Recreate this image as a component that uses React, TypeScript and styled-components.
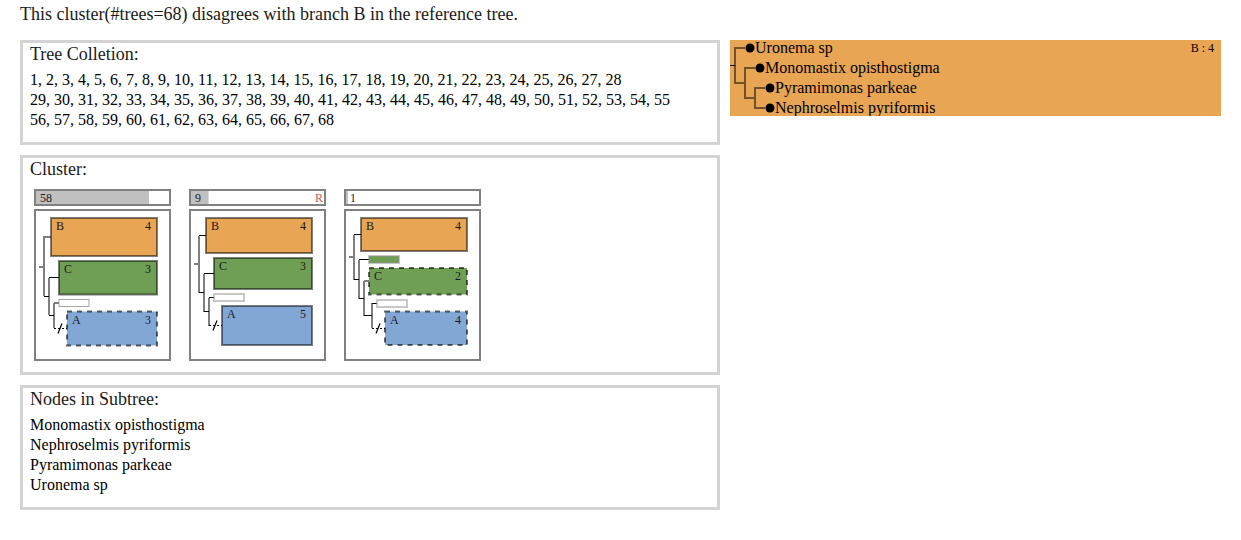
import React from "react";
import styled, { createGlobalStyle } from "styled-components";

const GlobalStyle = createGlobalStyle`
  * { box-sizing: border-box; }
  body {
    margin: 0;
    background: #fff;
    color: #000;
    font-family: "Liberation Serif", "Times New Roman", Times, serif;
    font-size: 16px;
    line-height: 20px;
  }
`;

const ORANGE = "#e8a553";
const GREEN = "#6f9e55";
const BLUE = "#82a7d5";

const Page = styled.main`
  padding: 3px 20px 30px;
`;

const Summary = styled.h1`
  margin: 0 0 15px;
  color: #1a1a1a;
  font-size: 18px;
  font-weight: 400;
  line-height: 22px;
`;

const Columns = styled.div`
  display: grid;
  grid-template-columns: minmax(0, 700px) minmax(0, 1fr);
  column-gap: 10px;
  align-items: start;
`;

const Stack = styled.div`
  display: flex;
  flex-direction: column;
  gap: 10px;
`;

const Panel = styled.section`
  border: 3px solid #d3d3d3;
  padding: 0 7px 7px;
`;

const PanelTitle = styled.h2`
  margin: 0 0 5px;
  color: #1a1a1a;
  font-size: 18px;
  font-weight: 400;
  line-height: 22px;
`;

const Lines = styled.ul`
  list-style: none;
  margin: 0;
  padding: 0 0 5px;
`;

const Thumbs = styled.div`
  display: flex;
  flex-wrap: wrap;
  gap: 18px;
  padding: 4px;
`;

const Thumb = styled.figure`
  width: 137px;
  margin: 0;
  display: flex;
  flex-direction: column;
  gap: 3px;
`;

const CountBar = styled.figcaption<{ $share: number }>`
  display: flex;
  justify-content: space-between;
  height: 17px;
  padding: 0 1px 0 4px;
  border: 2px solid #808080;
  background: linear-gradient(#c0c0c0, #c0c0c0) no-repeat left / ${(p) => p.$share}% 100%;
  color: #1a1a1a;
  font-size: 12px;
  line-height: 14px;
`;

const ReferenceMark = styled.span`
  color: #cd5c5c;
`;

const Frame = styled.div`
  border: 2px solid #808080;
  height: 152px;
`;

const Drawing = styled.svg`
  display: block;
  font-family: inherit;
`;

const ReferenceTree = styled.section`
  display: flex;
  justify-content: space-between;
  align-items: flex-start;
  overflow: hidden;
  background: ${ORANGE};
`;

const BranchTag = styled.span`
  padding: 0 7px 0 0;
  font-size: 12px;
  line-height: 16px;
  white-space: nowrap;
`;

type Block = {
  x: number;
  y: number;
  h: number;
  fill: string;
  label?: string;
  count?: number;
  dashed?: boolean;
};

type Tree = {
  trees: number;
  reference?: boolean;
  blocks: Block[];
  soft: string;
  crisp: string;
  missing: { x: number; y: number };
};

const TOTAL = 68;

// Coordinates are relative to the inside of a 133 x 148 frame.
const clusters: Tree[] = [
  {
    trees: 58,
    blocks: [
      { x: 15, y: 7, h: 38, fill: ORANGE, label: "B", count: 4 },
      { x: 23, y: 50, h: 33.5, fill: GREEN, label: "C", count: 3 },
      { x: 23, y: 88.5, h: 7, fill: "#fff" },
      { x: 31, y: 100.5, h: 34, fill: BLUE, label: "A", count: 3, dashed: true },
    ],
    soft: "M3 56H8M15 26H8V85M13 67V104M18 92V117M18 92H23",
    crisp: "M8 85.5H13M13 66.5H23M13 104.5H18",
    missing: { x: 18, y: 117.5 },
  },
  {
    trees: 9,
    reference: true,
    blocks: [
      { x: 15, y: 7, h: 35, fill: ORANGE, label: "B", count: 4 },
      { x: 23, y: 47, h: 31, fill: GREEN, label: "C", count: 3 },
      { x: 23, y: 83, h: 7, fill: "#fff" },
      { x: 31, y: 95, h: 39, fill: BLUE, label: "A", count: 5 },
    ],
    soft: "M3 53H8M8 25V82M13 63V101M18 87V115",
    crisp: "M8 24.5H15M8 81.5H13M13 62.5H23M13 100.5H18M18 86.5H23",
    missing: { x: 18, y: 114.5 },
  },
  {
    trees: 1,
    blocks: [
      { x: 15, y: 7, h: 33, fill: ORANGE, label: "B", count: 4 },
      { x: 23, y: 45, h: 7, fill: GREEN },
      { x: 23, y: 57, h: 26.5, fill: GREEN, label: "C", count: 2, dashed: true },
      { x: 31, y: 89, h: 7, fill: "#fff" },
      { x: 39, y: 100.5, h: 33.5, fill: BLUE, label: "A", count: 4, dashed: true },
    ],
    soft: "M3 46H8M8 24V69M13 49V88M18 70V105M18 70H23M26 92V117",
    crisp: "M8 23.5H15M8 68.5H13M13 48.5H23M13 87.5H18M18 104.5H26M26 92.5H31",
    missing: { x: 26, y: 117.5 },
  },
];

const RIGHT_EDGE = 121;

// Soft lines are two pixels wide and half transparent; crisp ones are solid hairlines.
function Branches({ soft, crisp }: { soft: string; crisp: string }) {
  return (
    <g fill="none" stroke="#000">
      <path d={soft} strokeWidth="2" strokeOpacity="0.5" />
      <path d={crisp} />
    </g>
  );
}

function ClusterTree({ tree }: { tree: Tree }) {
  const { x, y } = tree.missing;
  return (
    <Drawing width="133" height="148" viewBox="0 0 133 148" fontSize="12">
      <Branches soft={tree.soft} crisp={tree.crisp} />
      <path d={`M${x} ${y}H${x + 13}`} stroke="#000" strokeDasharray="2 2" />
      <path d={`M${x + 4} ${y + 5}L${x + 8} ${y - 5}`} stroke="#000" strokeWidth="1.2" />
      {tree.blocks.map((b, i) => (
        <g key={i}>
          <rect
            x={b.x}
            y={b.y}
            width={b.label ? RIGHT_EDGE - b.x : 30}
            height={b.h}
            fill={b.fill}
            stroke={b.label ? "#000" : "#909090"}
            strokeWidth={b.label || Number.isInteger(b.y) ? 2 : 1}
            strokeOpacity={b.label ? (b.dashed ? 0.6 : 0.5) : Number.isInteger(b.y) ? 0.5 : 0.8}
            strokeDasharray={b.dashed ? "5 5" : undefined}
          />
          {b.label && (
            <g fill="#1a1a1a">
              <text x={b.x + 5} y={Math.round(b.y) + 12}>{b.label}</text>
              <text x={RIGHT_EDGE - 6} y={Math.round(b.y) + 12} textAnchor="end">
                {b.count}
              </text>
            </g>
          )}
        </g>
      ))}
    </Drawing>
  );
}

const range = (from: number, to: number) =>
  Array.from({ length: to - from + 1 }, (_, i) => from + i).join(", ");

const collection = [range(1, 28), range(29, 55), range(56, 68)];

const nodes = [
  "Monomastix opisthostigma",
  "Nephroselmis pyriformis",
  "Pyramimonas parkeae",
  "Uronema sp",
];

const leaves = [
  { x: 20, y: 8, name: "Uronema sp" },
  { x: 30, y: 28, name: "Monomastix opisthostigma" },
  { x: 40, y: 48, name: "Pyramimonas parkeae" },
  { x: 40, y: 68, name: "Nephroselmis pyriformis" },
];

function TextPanel({ title, lines }: { title: string; lines: string[] }) {
  return (
    <Panel>
      <PanelTitle>{title}</PanelTitle>
      <Lines>
        {lines.map((line) => (
          <li key={line}>{line}</li>
        ))}
      </Lines>
    </Panel>
  );
}

export default function App() {
  return (
    <>
      <GlobalStyle />
      <Page>
        <Summary>
          This cluster(#trees=68) disagrees with branch B in the reference tree.
        </Summary>
        <Columns>
          <Stack>
            <TextPanel title="Tree Colletion:" lines={collection} />
            <Panel>
              <PanelTitle>Cluster:</PanelTitle>
              <Thumbs>
                {clusters.map((tree) => (
                  <Thumb key={tree.trees}>
                    <CountBar $share={(tree.trees / TOTAL) * 100}>
                      <span>{tree.trees}</span>
                      {tree.reference && <ReferenceMark>R</ReferenceMark>}
                    </CountBar>
                    <Frame>
                      <ClusterTree tree={tree} />
                    </Frame>
                  </Thumb>
                ))}
              </Thumbs>
            </Panel>
            <TextPanel title="Nodes in Subtree:" lines={nodes} />
          </Stack>
          <ReferenceTree>
            <Drawing width="260" height="76" viewBox="0 0 260 76" fontSize="16">
              <Branches
                soft="M15 8H5V43H15M25 28H15V58H25M35 48H25V68H35"
                crisp="M0 25.5H5"
              />
              {leaves.map((leaf) => (
                <g key={leaf.name}>
                  <circle cx={leaf.x} cy={leaf.y} r="4.5" />
                  <text x={leaf.x + 5} y={leaf.y + 5}>{leaf.name}</text>
                </g>
              ))}
            </Drawing>
            <BranchTag>B : 4</BranchTag>
          </ReferenceTree>
        </Columns>
      </Page>
    </>
  );
}
